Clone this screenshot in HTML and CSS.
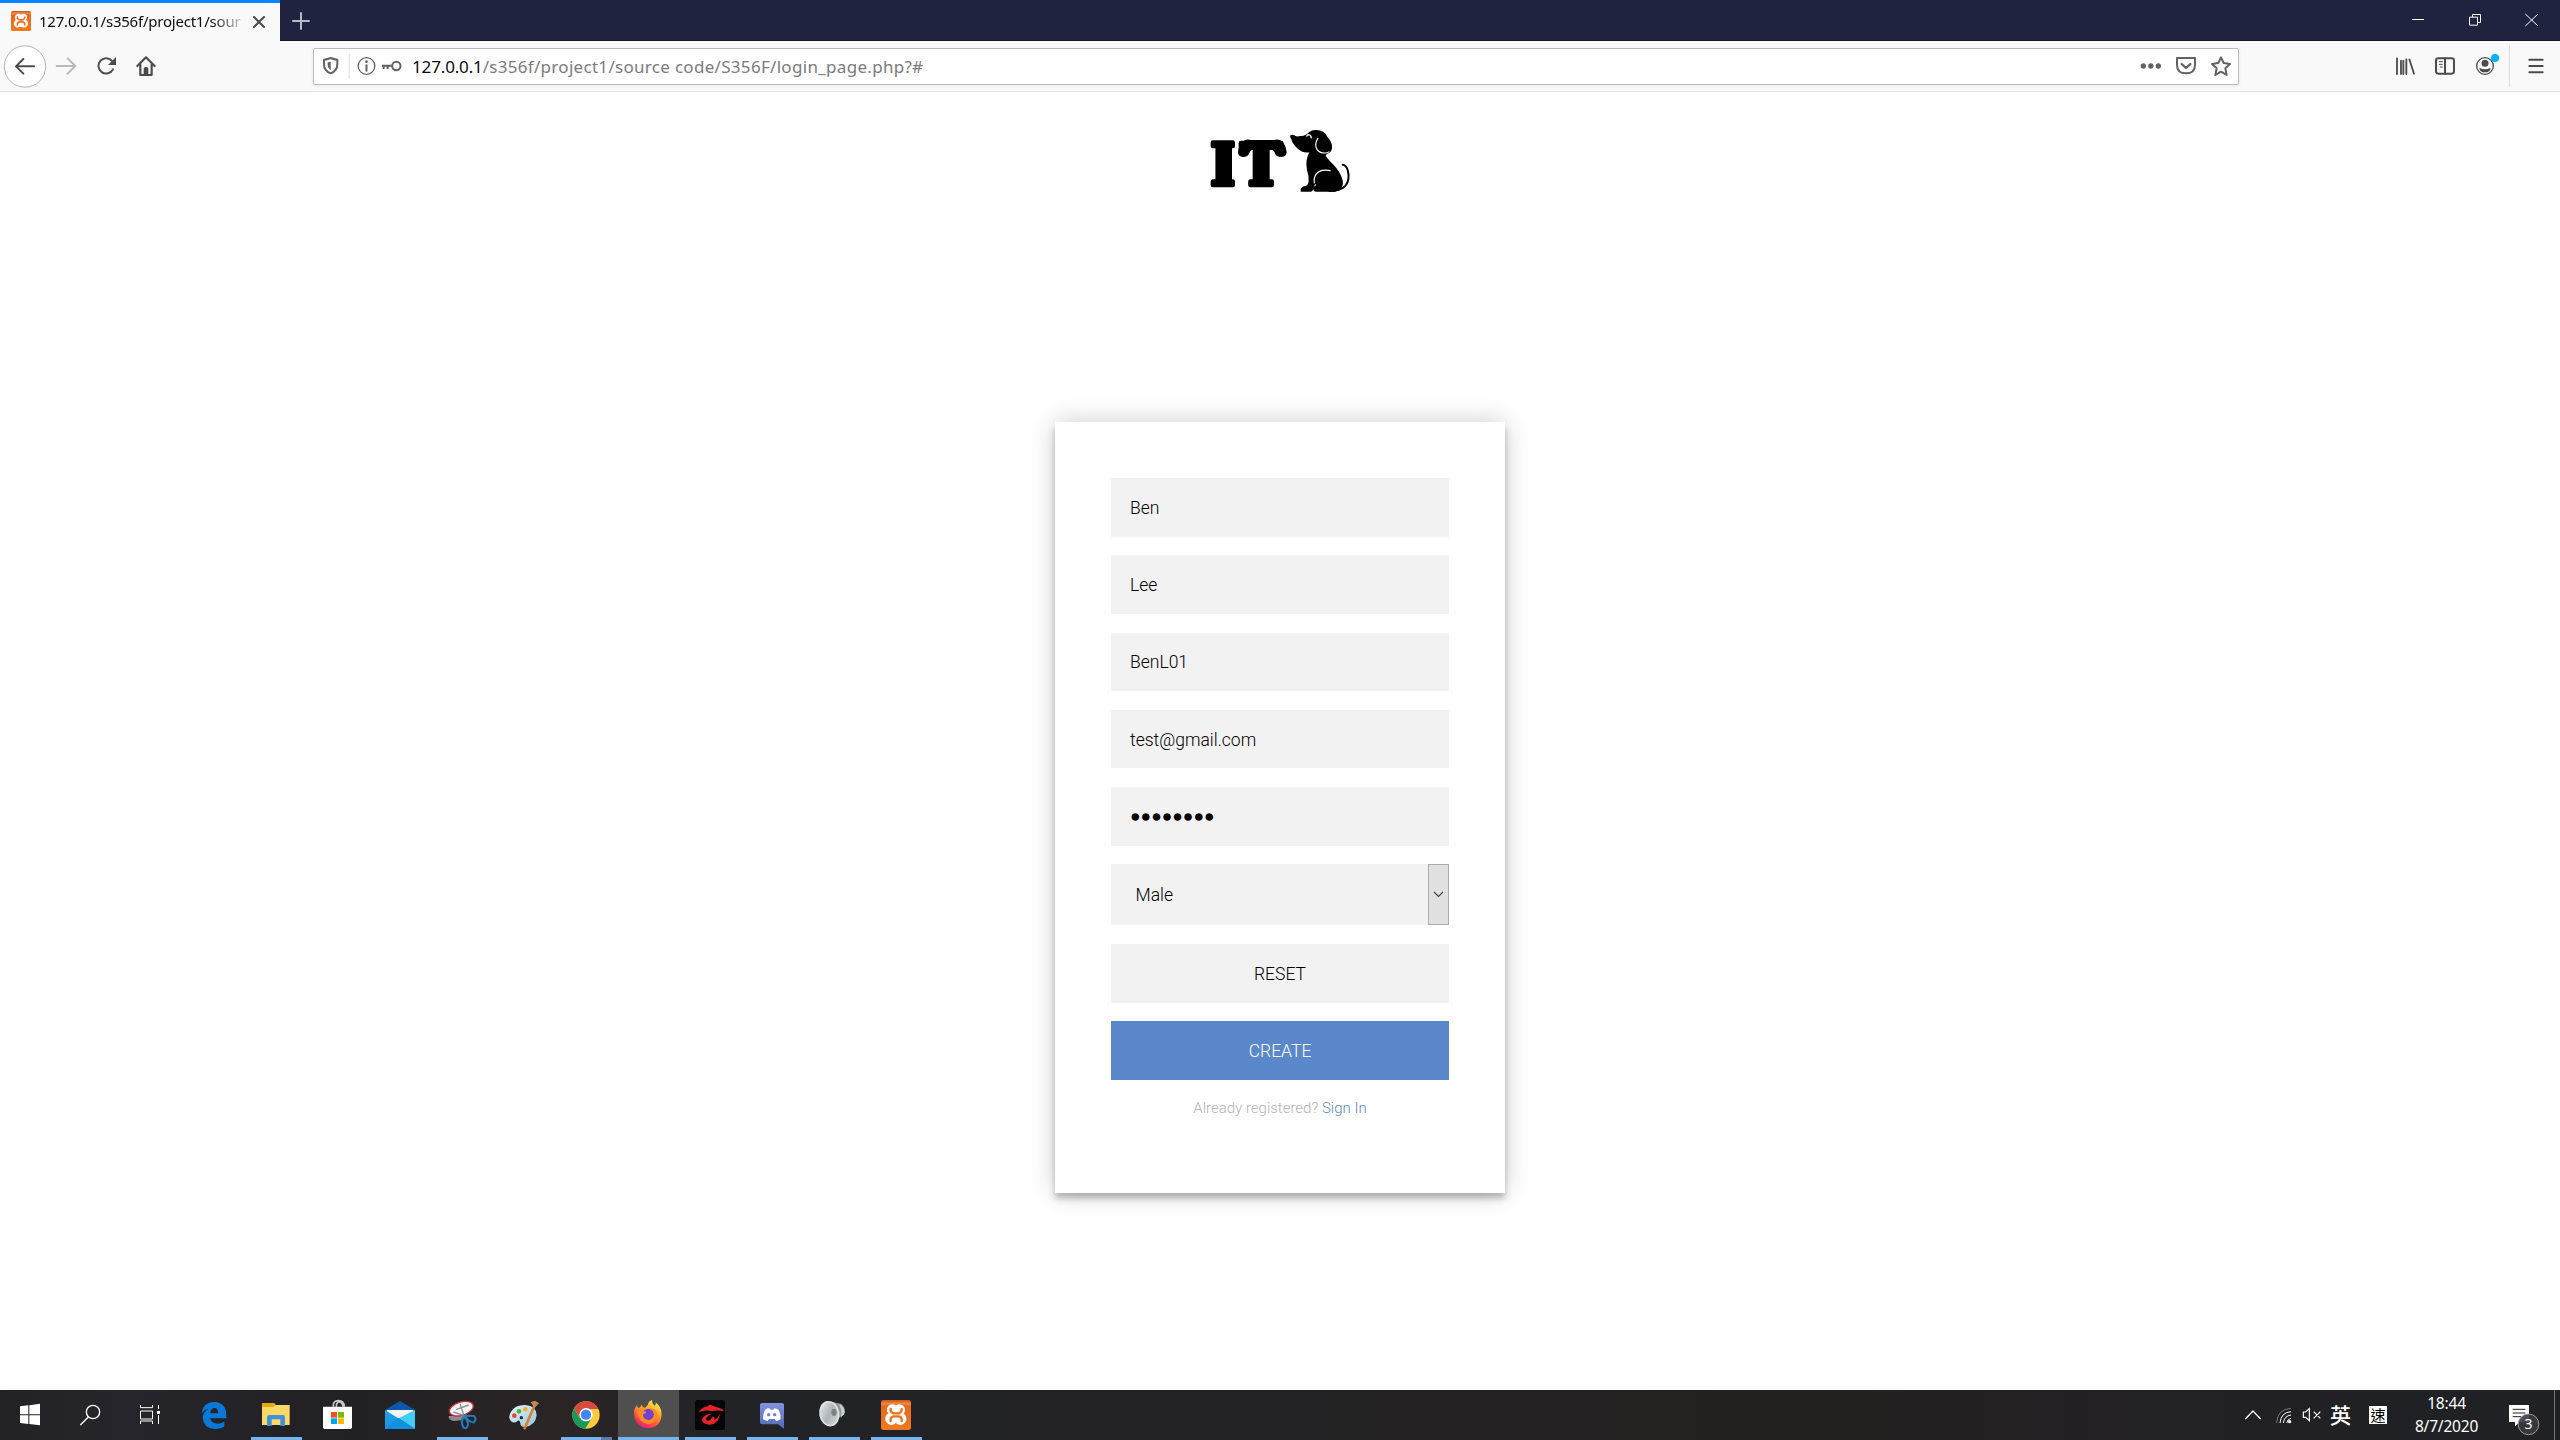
FILE: index.html
```html
<!DOCTYPE html>
<html lang="en">
<head>
<meta charset="utf-8">
<title>127.0.0.1/s356f/project1/source code/S356F/login_page.php</title>
<link rel="stylesheet" href="styles.css">
</head>
<body>
<svg class="defs" width="0" height="0">
  <defs>
    <linearGradient id="orange" x1="0" y1="0" x2="0" y2="1"><stop offset="0" stop-color="#c9560f"/><stop offset=".12" stop-color="#f08a45"/><stop offset=".2" stop-color="#e9681a"/><stop offset="1" stop-color="#f07a1e"/></linearGradient>
    <linearGradient id="fox" x1=".8" y1="0" x2=".3" y2="1"><stop offset="0" stop-color="#fff44f"/><stop offset=".4" stop-color="#ffa026"/><stop offset=".75" stop-color="#ff4a44"/><stop offset="1" stop-color="#e31587"/></linearGradient>
    <linearGradient id="discord" x1="0" y1="0" x2="0" y2="1"><stop offset="0" stop-color="#8194dc"/><stop offset="1" stop-color="#5468b8"/></linearGradient>
    <linearGradient id="metal" x1="0" y1="0" x2="1" y2="1"><stop offset="0" stop-color="#f0f2f3"/><stop offset=".5" stop-color="#aeb4b8"/><stop offset="1" stop-color="#d8dcde"/></linearGradient>
    <linearGradient id="mail" x1="0" y1="0" x2="1" y2="1"><stop offset="0" stop-color="#22a3e8"/><stop offset="1" stop-color="#0f87d8"/></linearGradient>
    <linearGradient id="palette" x1="0" y1="0" x2="1" y2="1"><stop offset="0" stop-color="#e8f5fb"/><stop offset="1" stop-color="#8fc4df"/></linearGradient>
    <symbol id="xampp" viewBox="0 0 90 90">
      <rect width="90" height="90" rx="7" fill="url(#orange)"/>
      <path d="M26 35a10 10 0 1 1 18-7q1 7 1 7q0-7 1-9a10 10 0 1 1 19 7q-5 8-3 12a12 12 0 1 1-14 18q-3-7-7 0a12 12 0 1 1-14-18q4-4-1-10z" fill="#fff" stroke="#fff" stroke-width="13" stroke-linejoin="round"/>
      <path d="M29 27q-2 9 9 13h16q9-4 8-13M29 63q-2-12 9-14h16q10 2 8 14" fill="none" stroke="#ee711c" stroke-width="7" stroke-linecap="round"/>
    </symbol>
  </defs>
</svg>

<header class="titlebar">
  <div class="tab">
    <svg class="favicon" viewBox="0 0 90 90"><use href="#xampp"/></svg>
    <span class="tab-title">127.0.0.1/s356f/project1/sour</span>
    <svg class="tab-close" viewBox="0 0 14 14"><path d="M2 2l10 10M12 2L2 12" stroke="#4a4a4b" stroke-width="2" stroke-linecap="round"/></svg>
  </div>
  <svg class="newtab" viewBox="0 0 18 18"><path d="M9 1v16M1 9h16" stroke="#b9b9c2" stroke-width="2" stroke-linecap="round"/></svg>
  <svg class="window-controls" viewBox="900 0 480 123" fill="none" stroke="#fff" stroke-width="3">
    <path d="M936 58.5h36M1108.500 51.500h24v24h-24zM1117.500 51v-7.500h24v24h-8"/>
    <path d="M1276 42l38 36M1314 42l-38 36"/>
  </svg>
</header>

<nav class="toolbar">
  <div class="nav-buttons">
    <svg width="50" height="50" viewBox="0 123 150 150"><circle cx="75" cy="199.500" r="62" fill="#fff" stroke="#b5b5b6" stroke-width="3"/><path d="M102 199H50M70 177l-22 22 22 22" fill="none" stroke="#4c4c4d" stroke-width="6" stroke-linecap="round" stroke-linejoin="round"/></svg>
    <svg width="36" height="50" viewBox="150 123 108 150"><path d="M170 198h54M203 175l23 23-23 23" fill="none" stroke="#b9b9ba" stroke-width="6" stroke-linecap="round" stroke-linejoin="round"/></svg>
    <svg width="40" height="50" viewBox="258 123 120 150"><path d="M337 184a23 23 0 1 0 2 24" fill="none" stroke="#4c4c4d" stroke-width="6" stroke-linecap="round"/><path d="M348 171v24h-24z" fill="#4c4c4d"/></svg>
    <svg width="40" height="50" viewBox="378 123 120 150"><path d="M412 198l26-26 26 26M421 194v31h34v-31" fill="none" stroke="#4c4c4d" stroke-width="6.500" stroke-linecap="round" stroke-linejoin="round"/><path d="M431 225v-19q0-5 7-5t7 5v19z" fill="#4c4c4d"/></svg>
  </div>
  <div class="urlbar">
    <svg class="identity" viewBox="943 147 285 105" fill="none" stroke="#626263" stroke-width="6">
      <path d="M973 179q10-1 20-5q10 4 20 5v13q0 21-20 28q-20-7-20-28z" stroke-linejoin="round"/><path d="M993 185v25q-9-4-9-17v-6z" fill="#626263" stroke="none"/>
      <path d="M1048.500 159v78" stroke="#dededf" stroke-width="3"/>
      <circle cx="1100.500" cy="198" r="25" stroke-width="4"/><path d="M1100.500 196v16" stroke-linecap="round"/><circle cx="1100.500" cy="185" r="4" fill="#626263" stroke="none"/>
      <circle cx="1190" cy="198" r="12.500"/><path d="M1178 197h-31M1152 197v10M1164 197v10"/>
    </svg>
    <span class="url"><span class="host">127.0.0.1</span><span class="path">/s356f/project1/source code/S356F/login_page.php?#</span></span>
    <svg class="page-actions" viewBox="111 147 303 105" fill="none" stroke="#626263" stroke-width="6" stroke-linejoin="round">
      <g fill="#626263" stroke="none"><circle cx="130" cy="198" r="8"/><circle cx="152.500" cy="198" r="8"/><circle cx="175" cy="198" r="8"/></g>
      <path d="M231 174h54v20q0 26-27 26t-27-26z"/><path d="M245 192l13 12 13-12" stroke-width="7" stroke-linecap="round"/>
      <path d="M363 172l8 17 19 3-14 13 4 20-17-10-17 10 4-20-14-13 19-3z"/>
    </svg>
  </div>
  <svg class="menu-icons" viewBox="879 123 501 150" fill="none" stroke="#4c4c4d" stroke-width="6" stroke-linecap="round" stroke-linejoin="round">
    <path d="M891 175v47M903 182v40M910 182v40M919 178v44M928 178l14 43" stroke-width="5.500"/>
    <rect x="1008" y="175" width="54" height="46" rx="7"/><path d="M1035 175v46"/><path d="M1018 185h9M1018 193h9M1021 201h6" stroke-width="3"/>
    <circle cx="1155" cy="198" r="25" stroke-width="4"/><circle cx="1155" cy="190" r="10.500" fill="#4c4c4d" stroke="none"/><path d="M1138 203q17 9 34 0q-1 14-17 14t-17-14z" fill="#4c4c4d" stroke="none"/>
    <circle cx="1185" cy="174" r="12" fill="#00b3f4" stroke="none"/>
    <path d="M1228.500 135v126" stroke="#dededf" stroke-width="3" stroke-linecap="butt"/>
    <path d="M1288 179h40M1288 198h40M1288 217h40"/>
  </svg>
</nav>

<main class="page">
  <svg class="logo" viewBox="0 0 600 300">
    <g class="logo-text">
      <text transform="translate(91 225) scale(.92 1)">I</text>
      <text transform="translate(181 225) scale(.96 1)">T</text>
    </g>
    <rect x="107" y="95" width="49" height="130" rx="8"/>
    <rect x="218" y="95" width="51" height="130" rx="8"/>
    <path d="M189 141q-15-2-15-14q2-25 20-36q8-4 18-1h69q12-3 20 1q17 11 19 36q0 12-15 14q-15 1-20-12q-3-8-8-9h-61q-5 1-8 9q-5 13-19 12z"/>
    <path d="M333 76q4-3 10 0q4 4 12 3l16-2q9-2 16-10q9-8 22-7q24 1 33 20q16 18 14 34q-1 14-15 17q-3 4-4 7q11 15 24 27q20 20 27 46q2 11 0 15q-5 14-23 19h-58q-9-2-6-11q1-6 8-9l-3-3q-3 3-5 12q-2 11-10 11h-29q-2-15 15-17q8-3 9-15q1-15-5-32q-6-30 7-54q-19 3-34-10q-17-15-20-29q-6-6-3-12z"/>
    <path d="M488 164q10 0 15 16q8 29-7 48q-16 15-48 15" fill="none" stroke="#000" stroke-width="6" stroke-linecap="round"/>
    <path d="M414 84q-12 19-3 34q8 12 25 11q7 0 12-4" fill="none" stroke="#fff" stroke-width="3.500"/>
    <path d="M403 220q-3-12 3-24q12-20 46-14" fill="none" stroke="#fff" stroke-width="3.500"/>
    <path d="M380 80q2-8 9-5q6 3 4 10" fill="none" stroke="#fff" stroke-width="4"/>
  </svg>

  <form class="card">
    <div class="field">Ben</div>
    <div class="field">Lee</div>
    <div class="field">BenL01</div>
    <div class="field">test@gmail.com</div>
    <div class="field password">●●●●●●●●</div>
    <div class="field select"><span>Male</span><i class="arrow"><svg width="11" height="7" viewBox="0 0 11 7"><path d="M1 1l4.500 4.500L10 1" fill="none" stroke="#444" stroke-width="1.200"/></svg></i></div>
    <button class="reset" type="button">RESET</button>
    <button class="create" type="button">CREATE</button>
    <p class="message">Already registered? <a>Sign In</a></p>
  </form>
</main>

<footer class="taskbar">
  <svg width="60" height="50" viewBox="0 30 180 150"><path d="M60 79l25-3v27H60zM88 75.500l32-4.500v32H88zM60 106h25v26l-25-3zM88 106h32v30l-32-4z" fill="#fff"/></svg>
  <svg width="60" height="50" viewBox="180 30 180 150" fill="none" stroke="#fff" stroke-width="4"><circle cx="279" cy="96" r="20"/><path d="M265 111l-24 24"/></svg>
  <svg width="63" height="50" viewBox="360 30 189 150" fill="none" stroke="#fff" stroke-width="3"><path d="M421.500 75v8h36v-8M421.500 93h36v24h-36zM421.500 132v-9h36v9M475.500 75v12M475.500 105v27"/><path d="M471 93h9v9h-9z" fill="#fff" stroke="none"/></svg>
  <svg width="62" height="50" viewBox="549 30 186 150"><path d="M605 101q4-35 38-35q36 2 36 40v9h-49q3 15 22 16q11 0 21-6v15q-12 7-29 7q-34-3-36-34q2-20 18-26q-14 1-21 14zM631 100h24q-1-16-12-16q-11 1-12 16z" fill="#0a78d6" fill-rule="evenodd"/></svg>
  <svg width="62" height="50" viewBox="735 30 186 150"><path d="M786 69h36l5 6h42v60h-83z" fill="#ffd866"/><path d="M786 69h36l4 5-5 7h-35z" fill="#e8a90c"/><path d="M801 138v-26q0-7 7-7h41q6 0 6 7v26h-14v-20h-26v20z" fill="#3b94dc"/><path class="active" d="M753 171h153v9H753z"/></svg>
  <svg width="62" height="50" viewBox="921 30 186 150"><path d="M1000 80q-2-18 15-18t18 18M1009 80q0-14 9-14t11 14" fill="none" stroke="#c9c9c9" stroke-width="5"/><path d="M969 80h87v62q0 5-5 5h-77q-5 0-5-5z" fill="#fff"/><path d="M993 96h18v17h-18z" fill="#f25022"/><path d="M1014 96h18v17h-18z" fill="#7fba00"/><path d="M993 115h18v17h-18z" fill="#00a4ef"/><path d="M1014 115h18v17h-18z" fill="#ffb900"/></svg>
  <svg width="62" height="50" viewBox="1107 30 186 150"><path d="M1155 90l45-27 45 27v10h-90z" fill="#0b59a8"/><path d="M1160 90h80v25h-80z" fill="#f2f2f2"/><path d="M1155 90l42 26 48 31h-90z" fill="url(#mail)"/><path d="M1245 90v57l-49-32z" fill="#43cdf6"/><path d="M1155 147l41-32 49 32z" fill="#138fe0"/></svg>
  <svg width="62" height="50" viewBox="3 30 186 150"><path d="M56 108q-2 12 15 15l22-2 8-14z" fill="#8c8c90"/><ellipse cx="94" cy="86" rx="37" ry="20" transform="rotate(-17 94 86)" fill="#f5f5f5" stroke="#cf2d35" stroke-width="4"/><path d="M90 71l12 37M70 96l42 14M78 89l38-14" stroke="#8b9096" stroke-width="4"/><path d="M101 110q-9 14-2 30q8 12 15-5q0-16-13-25zM104 108q10-2 28 0q9 8 0 19q-12 2-28-19z" fill="none" stroke="#1d7fc0" stroke-width="6"/><path class="active" d="M21 171h153v9H21z"/></svg>
  <svg width="62" height="50" viewBox="189 30 186 150"><path d="M244 94q13-20 42-19q34 3 34 31q-3 30-34 35q-13 1-15-9q1-12-8-10q-9 10-20 2q-11-12 1-30z" fill="url(#palette)"/><circle cx="253" cy="107" r="7" fill="#dc4b40"/><circle cx="267" cy="94" r="7" fill="#51b04a"/><circle cx="286" cy="88" r="7" fill="#f0b429"/><circle cx="274" cy="113" r="5" fill="#222326"/><path d="M314 76l-30 69" stroke="#d9802b" stroke-width="8" stroke-linecap="round"/><path d="M302 66l13-4 12 8-14 14z" fill="#b88a58"/></svg>
  <svg width="62" height="50" viewBox="375 30 186 150"><circle cx="468" cy="105" r="41" fill="#fccb3c"/><path d="M432 85a41 41 0 0 1 73 2h-37l-18 28z" fill="#d84a3d"/><path d="M432 85a41 41 0 0 0 34 61l19-32-36 0z" fill="#17995a"/><circle cx="468" cy="104" r="20" fill="#fff"/><circle cx="468" cy="104" r="15.500" fill="#4285f4"/><path class="active" d="M393 171h120v9H393z"/><path d="M513 171h33v9h-33z" fill="#567fae"/></svg>
  <svg width="62" height="50" viewBox="561 30 186 150"><path d="M564 30h183v150H564z" fill="#4f4f50"/><path d="M613 105q-3-17 8-30q0 8 5 9q6-2 8-10q3 8 11 9l9-9q1-10 12-14q0 13 9 17q3-5 2-10q18 15 18 36q-2 40-42 42q-37-4-40-40z" fill="url(#fox)"/><circle cx="655" cy="103" r="17" fill="#7042cf"/><path d="M621 92q12-4 18 1l10 2q-2 7-10 8q-1 17 17 18q15-1 16-18q-3-14-17-18q18-3 26 13q3 30-25 35q-31-4-35-41z" fill="#ff8b22"/><path class="active" d="M564 171h183v9H564z"/></svg>
  <svg width="62" height="50" viewBox="747 30 186 150"><rect x="795" y="60" width="90" height="90" rx="7" fill="#060607"/><path d="M806 98q9-17 27-19q3-4 8-5q14 6 36 13l4 7q-20-5-36 0q-17-5-26 0q-7 0-13 4zM871 99q-4 33-32 35q-25-1-23-16q3-15 30-17q-17 8-18 16q2 8 11 4q8-5 9-12q9 3 4 12q14-8 19-22z" fill="#e32229"/><path class="active" d="M765 171h153v9H765z"/></svg>
  <svg width="62" height="50" viewBox="933 30 186 150"><path d="M996 69h60q6 0 6 6v71l-18-13h-48q-6 0-6-6V75q0-6 6-6z" fill="url(#discord)"/><path d="M1005 89q8-5 14-4l2 4h9l2-4q9 1 14 5q7 14 6 27q-7 6-14 6l-4-6h-17l-4 6q-9-1-14-6q-1-14 6-28z" fill="#fff"/><circle cx="1016" cy="104" r="5" fill="#6e82cf"/><circle cx="1034" cy="104" r="5" fill="#6e82cf"/><path class="active" d="M951 171h153v9H951z"/></svg>
  <svg width="62" height="50" viewBox="1119 30 186 150"><path d="M1200 64l34 8q13 12 11 26l-15 12-20 20z" fill="#8f9599"/><path d="M1227 71q18 8 16 32l-12 10q8-20-4-42z" fill="#cbd0d3"/><ellipse cx="1198" cy="101" rx="28" ry="36" transform="rotate(-10 1198 101)" fill="url(#metal)" stroke="#dfe3e5" stroke-width="5"/><ellipse cx="1212" cy="97" rx="8" ry="11" fill="#7c8387"/><path class="active" d="M1137 171h153v9H1137z"/></svg>
  <svg width="62" height="50" viewBox="1305 30 186 150"><use href="#xampp" x="1353" y="60" width="90" height="90"/><path class="active" d="M1323 171h153v9H1323z"/></svg>

  <div class="tray">
    <svg width="89" height="50" viewBox="120 30 267 150" fill="none" stroke="#fff" stroke-width="4">
      <path d="M136 117l23-24 23 24"/>
      <path d="M230 129q2-42 43-44" stroke="#777" stroke-width="3"/><path d="M240 129q3-32 33-34M250 129q3-22 23-24M260 129q2-12 13-14" stroke-width="3"/><circle cx="269" cy="125" r="5" fill="#fff" stroke="none"/>
      <path d="M310 96h7l11-10v36l-11-10h-7zM341 95l20 20M361 95l-20 20" stroke-width="3.500"/>
    </svg>
    <span class="ime">英</span>
    <span class="quick">速</span>
    <div class="clock"><span>18:44</span><span>8/7/2020</span></div>
    <svg class="notify" viewBox="900 30 180 150"><path d="M927 75h60v51h-28l-14 13v-13h-18z" fill="#fff"/><path d="M938 88h38M938 99h38M938 110h25" stroke="#222" stroke-width="3"/><circle cx="985.500" cy="133" r="31" fill="#3b3b3e" fill-opacity=".9" stroke="#9b9b9d" stroke-width="3"/><text x="985.500" y="147" text-anchor="middle" class="count">3</text><path d="M1063.500 30v150" stroke="#777" stroke-width="3"/></svg>
  </div>
</footer>
</body>
</html>
```
FILE: styles.css
```css
* { box-sizing: border-box; }
body {
  margin: 0;
  width: 2560px;
  height: 1440px;
  overflow: hidden;
  display: flex;
  flex-direction: column;
  background: #fff;
  font-family: "Noto Sans", "Noto Sans CJK TC", sans-serif;
}
svg { display: block; flex: none; }
.defs { position: absolute; }

.titlebar {
  height: 41px;
  flex: none;
  display: flex;
  align-items: center;
  background: #202340;
  box-shadow: inset 0 -1px #15152f;
}
.tab {
  width: 280px;
  height: 41px;
  display: flex;
  align-items: center;
  padding: 0 0 2px 11px;
  background: #f9f9fa;
  border-top: 3px solid #0a84ff;
}
.favicon { width: 20px; height: 20px; }
.tab-title {
  width: 212px;
  margin-left: 8px;
  white-space: nowrap;
  font-size: 15px;
  line-height: 24px;
  letter-spacing: -.22px;
  color: #0c0c0d;
  -webkit-mask-image: linear-gradient(to right, #000 172px, transparent 210px);
  mask-image: linear-gradient(to right, #000 172px, transparent 210px);
}
.tab-close { width: 14px; height: 14px; margin: 2px 0 0 1px; }
.newtab { width: 18px; height: 18px; margin-left: 12px; }
.window-controls { width: 160px; height: 41px; margin-left: auto; }

.toolbar {
  height: 51px;
  flex: none;
  display: flex;
  background: #f9f9fa;
  border-bottom: 1px solid #e0e0e1;
}
.nav-buttons { width: 313px; display: flex; }
.urlbar {
  width: 1926px;
  height: 37px;
  margin-top: 7px;
  display: flex;
  align-items: center;
  background: #fff;
  border: 1px solid #b9b9ba;
  border-radius: 2px;
  box-shadow: 0 1px 4px rgba(0, 0, 0, .06);
}
.identity { width: 95px; height: 35px; }
.url {
  flex: 1;
  padding-left: 3px;
  white-space: nowrap;
  font-size: 17px;
  line-height: 24px;
}
.host { color: #0c0c0d; letter-spacing: -.15px; }
.path { color: #7b7b7c; letter-spacing: .3px; }
.page-actions { width: 101px; height: 35px; }
.menu-icons { width: 167px; height: 50px; margin-left: auto; }

.page {
  height: 1298px;
  flex: none;
  display: flex;
  flex-direction: column;
  align-items: center;
  font-family: Roboto, sans-serif;
  font-weight: 300;
}
.logo { width: 200px; height: 100px; margin-top: 18px; }
.logo-text {
  font-family: "DejaVu Serif", serif;
  font-weight: 700;
  font-size: 175px;
  stroke: #000;
  stroke-width: 14px;
  stroke-linejoin: round;
}

.card {
  width: 450px;
  height: 771px;
  margin-top: 212px;
  padding: 56px 56px 0;
  background: #fff;
  box-shadow: 0 0 25px rgba(0, 0, 0, .2), 0 6.25px 6.25px rgba(0, 0, 0, .24);
}
.field, .reset, .create {
  width: 338px;
  height: 58.500px;
  margin: 0 0 18.750px;
  padding: 1px 19px 0;
  display: flex;
  align-items: center;
  border: 0;
  background: #f2f2f2;
  color: #000;
  font: 300 17.500px Roboto, sans-serif;
}
.password { font-family: "DejaVu Sans", sans-serif; font-size: 17.500px; letter-spacing: -2.900px; }
.select {
  height: 61px;
  padding: 0 0 0 24.500px;
  justify-content: space-between;
}
.password { letter-spacing: 0; }
.arrow {
  width: 21px;
  height: 61px;
  display: flex;
  align-items: center;
  justify-content: center;
  background: #e1e1e1;
  border: 1px solid #adadad;
}
.reset, .create { justify-content: center; }
.create { margin-bottom: 0; background: #5b88ca; color: #fff; }
.message {
  margin: 18px 0 0;
  text-align: center;
  font-size: 15px;
  line-height: 20px;
  color: #b3b3b3;
}
.message a { color: #5b88ca; }

.taskbar {
  height: 50px;
  flex: none;
  display: flex;
  background: linear-gradient(to right, #222226, #25252b 5%, #212124 14%, #2b2425 21%, #222327 29%, #222224 45%, #242020 70%, #202125 95%);
}
.active { fill: #76b4ee; }
.tray {
  width: 320px;
  margin-left: auto;
  display: flex;
  align-items: center;
  color: #fff;
}
.ime {
  width: 25px;
  margin: -3px 0 0 1px;
  font: 500 21px/26px "Noto Sans CJK TC", sans-serif;
}
.quick {
  width: 18px;
  height: 18px;
  margin-left: 14px;
  background: #fff;
  color: #000;
  font: 400 15px/18px "Noto Sans CJK TC", sans-serif;
  text-align: center;
}
.clock {
  width: 113px;
  display: flex;
  flex-direction: column;
  align-items: center;
  padding-left: 6px;
  font-size: 15.500px;
  line-height: 23px;
  letter-spacing: -.2px;
}
.notify { width: 60px; height: 50px; }
.count { fill: #fff; font-size: 42px; }
```
